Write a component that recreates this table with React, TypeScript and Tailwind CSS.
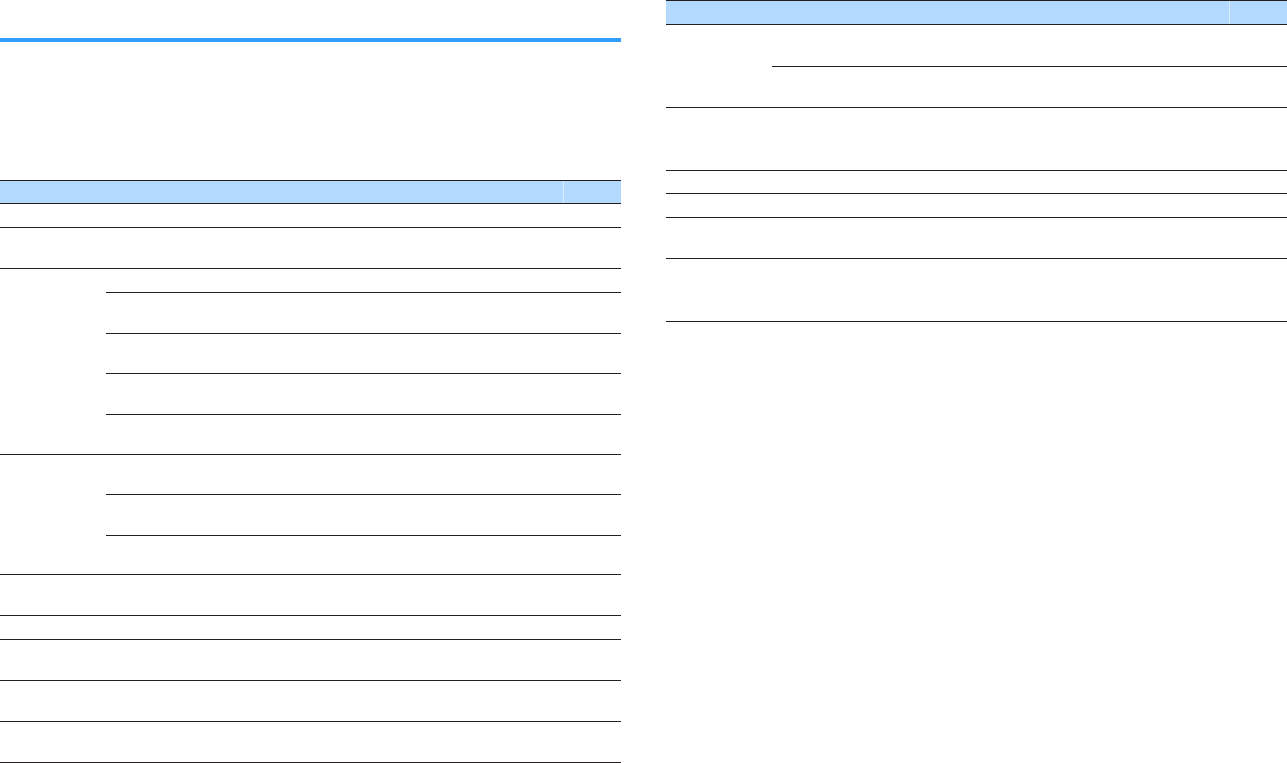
import React from 'react';

// Blank spec tables: rows only, no text in the source
const Row: React.FC<{ h: string; last?: boolean }> = ({ h, last }) => (
  <div className={`${h} ${last ? '' : 'border-b border-[#231f20]'}`} />
);

const Header: React.FC<{ h: string }> = ({ h }) => (
  <div className={`${h} flex border-y border-[#231f20] bg-[#b3d9ff]`}>
    <div className="w-[564px] shrink-0 border-r border-[#d8ecff]" />
    <div className="flex-1" />
  </div>
);

const Group: React.FC<{ h: string; children: React.ReactNode }> = ({ h, children }) => (
  <div className={`${h} flex border-b border-[#231f20]`}>
    <div className="w-[106px] shrink-0" />
    <div className="flex min-w-0 flex-1 flex-col">{children}</div>
  </div>
);

const App: React.FC = () => {
  return (
    <div className="flex min-h-[763px] w-[1287px] bg-white font-['Liberation_Sans',sans-serif]">
      <div className="w-[621px] shrink-0 pt-[38px]">
        <div className="h-[4px] bg-[#339cff]" />
        <div className="mt-[138px]">
          <Header h="h-[24px]" />
          <Row h="h-[24px]" />
          <Row h="h-[41px]" />
          <Group h="h-[186px]">
            <Row h="h-[24px]" />
            <Row h="h-[41px]" />
            <Row h="h-[40px]" />
            <Row h="h-[41px]" />
            <Row h="h-[39px]" last />
          </Group>
          <Group h="h-[120px]">
            <Row h="h-[40px]" />
            <Row h="h-[41px]" />
            <Row h="h-[38px]" last />
          </Group>
          <Row h="h-[41px]" />
          <Row h="h-[24px]" />
          <Row h="h-[41px]" />
          <Row h="h-[41px]" />
          <Row h="h-[41px]" />
        </div>
      </div>

      <div className="ml-[45px] w-[621px] shrink-0">
        <Header h="h-[25px]" />
        <Group h="h-[83px]">
          <Row h="h-[42px]" />
          <Row h="h-[40px]" last />
        </Group>
        <Row h="h-[63px]" />
        <Row h="h-[23px]" />
        <Row h="h-[24px]" />
        <Row h="h-[41px]" />
        <Row h="h-[63px]" />
      </div>
    </div>
  );
};

export default App;
